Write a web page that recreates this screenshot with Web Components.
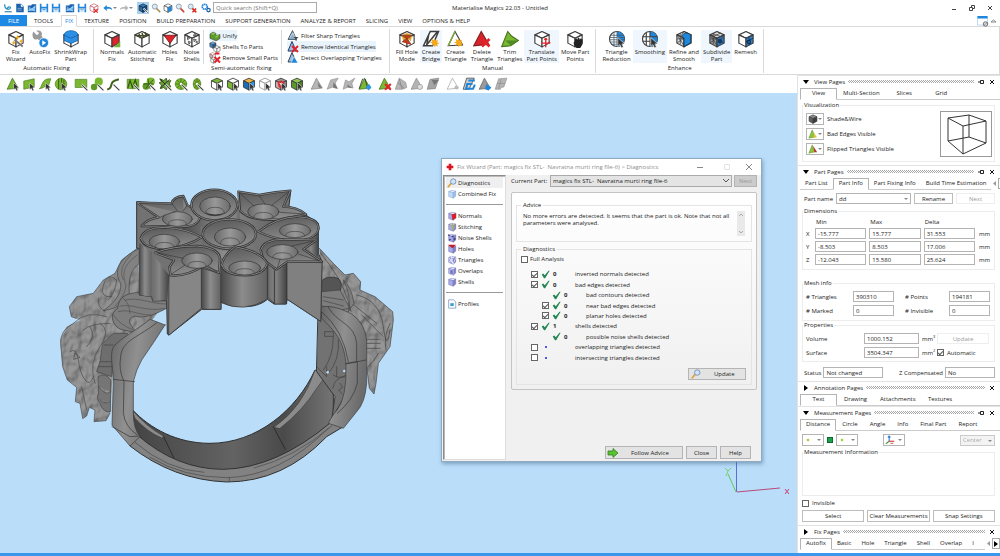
<!DOCTYPE html>
<html lang="en">
<head>
<meta charset="utf-8">
<title>Materialise Magics 22.03 - Untitled</title>
<style>
html,body{margin:0;padding:0}
body{font:6px/8px "Open Sans","Noto Sans",sans-serif;color:#1c1c1c;background:#fff}
</style>
</head>
<body>
<mg-app></mg-app>
<script>
const BASE=`*{box-sizing:border-box}
:host{display:block}
button,input,select,textarea{font:inherit;color:inherit;margin:0;padding:0;border:0;background:none;border-radius:0;outline:0;min-width:0}
button{cursor:pointer;white-space:nowrap}
a{color:inherit;text-decoration:none}
label{white-space:nowrap}
input[type=checkbox]{appearance:none;width:7px;height:7px;border:1px solid #666;background:#fff;display:inline-grid;place-items:center;flex:none}
input[type=checkbox]:checked::before{content:"";width:4px;height:2px;border:solid #555;border-width:0 0 1px 1px;transform:rotate(-45deg)}
fieldset{margin:0;padding:0;border:1px solid #e4e4e4;min-width:0}
legend{padding:0 2px;line-height:8px}
.box{height:11px;border:1px solid #b4b4b4;background:#fff;padding:0 2px;width:100%}
.btn{height:12px;border:1px solid #bdbdbd;background:#fff;text-align:center}`;
function define(name,css,render){
  customElements.define(name,class extends HTMLElement{
    connectedCallback(){
      if(this.shadowRoot)return;
      const t=document.createElement('template');
      t.innerHTML='<style>'+BASE+css+'</style>'+render(this);
      this.attachShadow({mode:'open'}).append(t.content.cloneNode(true));
    }
  });
}

/* ---------- icons (24 unit grid) ---------- */
const K='#3c3c3c',B='#1f86dc',R='#e0242c',G='#7ab82f';
const cube=(top='#fff',l='#fff',r='#fff',s=K)=>`<g stroke="${s}" stroke-width="1.5" stroke-linejoin="round"><path fill="${top}" d="M12 2 21.500 6.500 12 11 2.500 6.500z"/><path fill="${l}" d="M2.500 6.500 12 11V22.500L2.500 17.500z"/><path fill="${r}" d="M21.500 6.500 12 11V22.500L21.500 17.500z"/></g>`;
const cursor='<path fill="#333" stroke="#fff" stroke-width=".8" d="M13 10v12l3-2.500 2 4.500 2.500-1.200-2-4.300h4z"/>';
const wand='<path stroke="#fff" stroke-width="4" d="m13 13 10 10"/><path stroke="#444" stroke-width="2" d="m13 13 10 10"/>';
const star='<path fill="#f5a81c" d="m17 11 1.200 3.200 3.200-1.200-1.200 3.200 3.200 1.300-3.200 1.300 1.200 3.200-3.200-1.200L17 23l-1.200-3.200-3.200 1.200 1.200-3.200-3.200-1.300 3.200-1.300-1.200-3.200 3.200 1.200z"/>';
const cross='<path stroke="#e0242c" stroke-width="3.500" d="m12 12 10 10M22 12 12 22"/>';
const tri=(f,s)=>`<path fill="${f}" stroke="${s}" stroke-width="1.300" stroke-linejoin="round" d="M11 2 21 19 2 21z"/>`;
const GS='#44731b',gtri=tri(G,GS),grey=tri('#b5b5b5','#8b8b8b');
const mag=(c='#c98a30')=>`<path stroke="${c}" stroke-width="4" stroke-linecap="round" d="m13 13 8 8"/><circle cx="9" cy="8.500" r="6" fill="#dceaf6" stroke="#8798a8" stroke-width="2"/>`;
const mag2=`<path stroke="#d9a23a" stroke-width="4" stroke-linecap="round" d="m9 14-6 7"/><circle cx="15" cy="8.500" r="6.500" fill="#cfe6fa" stroke="#6b86b0" stroke-width="2"/>`;
const disk=`<path fill="${B}" d="M2 2h20v20H2zM6 2v7h12V2zM6 13v9h12v-9z" fill-rule="evenodd"/><path fill="${B}" d="M8 15h8v2H8zM8 18.500h8v1.500H8z"/>`;
const pcube=(extra='')=>`<g stroke="#6264a8" stroke-width="1"><path fill="#e4e5fb" d="m4 6 6-3 11 2-6 4z"/><path fill="#a9abe6" d="m4 6 11 3v13L4 18z"/><path fill="#7d80cf" d="m15 9 6-4v12l-6 5z"/></g>`+extra;
const globe=`<circle cx="12" cy="12" r="10" fill="#fff" stroke="${K}" stroke-width="1.500"/>`;
const wheel=(rx)=>`<ellipse cx="12" cy="12" rx="${rx}" ry="9.500" fill="${G}" stroke="${GS}"/><path stroke="#31560f" d="M12 3v18M${12-rx} 12h${2*rx}M${12-rx*.7} 5l${rx*1.4} 14M${12+rx*.7} 5l${-rx*1.4} 14"/><circle cx="12" cy="12" r="2" fill="#fff"/>`+wand;
const ICONS={
 logo:`<path fill="none" stroke="#2c8fc4" stroke-width="3" d="M4 3c0 9 3 12 9 12s6-6 2-6-5 6-5 8"/><path stroke="#2c6f94" stroke-width="2.500" d="M4 21h17"/>`,
 doc:`<path fill="#1b62ad" d="M3 2h12l6 6v14H3z"/><path fill="#fff" d="M14 2v7h7z"/><path stroke="#fff" d="M6 13h10M6 17h10"/>`,
 import:`<path fill="#1b62ad" d="M2 6h8l2-3h10v19H2z"/><path fill="#69b6ef" d="m4 10 6 5 10-10v14H4z"/><path stroke="#fff" d="m3 18 18-9M4 9l15 11"/>`,
 disk,saveas:disk+`<path stroke="#fff" stroke-width="3" d="M4 14h16"/><path stroke="#29669e" stroke-width="1.500" d="M4 14h16"/>`,
 rmcube:cube('#fff','#fff','#fff','#c5525b')+`<path stroke="${R}" stroke-width="3" d="m12 14 9 9m0-9-9 9"/>`,
 undo:`<path fill="${B}" d="M9 5v4c8 0 13 2 13 8-3-3-7-4-13-3v5l-8-7z"/>`,
 redo:`<path fill="#b9b9b9" d="M15 5v4C7 9 2 11 2 17c3-3 7-4 13-3v5l8-7z"/>`,
 bcube:cube('#2e7fc4','#2e6ea6','#184d80','#123')+wand,
 zfit:mag('#a99157'),zcube:cube()+`<path fill="${B}" d="m12 11 9-4v11l-9 4z"/>`,zoom:mag('#d03d2f'),
 zrm:mag('#d98b2f')+`<path stroke="${R}" stroke-width="3.500" d="m13 13 9 9m0-9-9 9"/>`,
 gears:`<circle cx="9" cy="9" r="6" fill="none" stroke="${B}" stroke-width="4" stroke-dasharray="4 1"/><circle cx="18" cy="17" r="4" fill="#fff" stroke="#1b62ad" stroke-width="3"/>`,
 fixwiz:cube()+`<path stroke="#777" stroke-width="2.500" d="m10 13 11 9"/><path fill="#f5a81c" d="m14 6 1 3 3 1-3 1-1 3-1-3-3-1 3-1zM19 12l1 2 2 1-2 1-1 2-1-2-2-1 2-1zM9 14l1 2 2 1-2 1-1 2-1-2-2-1 2-1z"/>`,
 autofix:`<path fill="#9a9a9a" d="M3 2 8 7l3-3-4-3c6-2 9 3 7 7l8 9-4 4-9-9C4 15 0 9 3 2z"/><circle cx="17" cy="17" r="6.500" fill="${B}" stroke="#fff"/><path fill="#fff" d="m15 13.500 5 3.500-5 3.500z"/>`,
 shrink:cube()+`<path fill="#2b8fe6" stroke="#155b9c" d="M12 1c6 0 9 3 9 5v8l-9 4-9-4V6c0-2 3-5 9-5z"/><path fill="none" stroke="#155b9c" d="m3 7 9 4 9-4"/>`,
 normals:cube('#fff','#fff',R)+`<path fill="#74b53c" d="m14 23 9-8v8z"/>`,
 stitch:cube()+`<path stroke="#454a25" stroke-width="2" d="m5 8 15-2M8 5l2 6M12 4l2 6M16 3l2 6"/>`,
 holes:cube()+`<path fill="${R}" stroke="#5e1114" d="m4 7 16 0-8 11z"/>`,
 noise:cube()+`<g stroke="#444" fill="#bbb"><path d="m6 9 3 2-3 2zM15 5l3 2-4 1zM14 12l4 1-3 3zM7 15l3 1-2 3zM17 16l2-1v3z"/></g>`,
 unify:`<path fill="#5c9a2b" stroke="#335" d="m2 8 6-4 6 3v4l8-2v8l-8 5-6-3-6-2z"/><path fill="#8bc84a" d="m8 5 5 2-5 3-4-2zM13 12l8-3-4 5-4 2z"/>`,
 shells:`<g transform="scale(.65)">${cube('#78aee0','#3c82c4','#205c96')}</g><g transform="translate(8 8) scale(.66)">${cube()}</g>`,
 rmsmall:`<g transform="scale(.6)">${cube('#fff','#bbb','#eee','#844')}</g><g transform="translate(2 9) scale(.6)">${cube('#fff','#fff','#eee',K)}</g><path stroke="${R}" stroke-width="4" d="m11 10 11 11m0-11L11 21M12 3h9"/>`,
 sharp:`<path fill="#8dabc2" stroke="#345" stroke-width="1.500" d="m11 1 8 18H2z"/><path stroke="#fff" d="m6 15 6-9 4 11"/><path fill="#445" d="M13 14h10l-4 4v5l-2-2v-3z"/>`,
 ident:`<path fill="#9cc3e6" stroke="#223a66" stroke-width="2" d="m10 1 8 19H2z"/><path stroke="${R}" stroke-width="4" d="m10 10 12 12m0-12L10 22"/>`,
 overlap:`<path fill="#9cc3e6" stroke="#345" stroke-width="2" d="m10 1 8 19H2z"/><path fill="${B}" stroke="#fff" d="m14 9 8 13H8z"/>`,
 fillhole:cube()+`<path fill="#e7a12b" d="m5 7 7-3 7 3-2 8-5-4-5 4z"/><path fill="#c23a1e" stroke="#742" d="m5 7 14 0-7 5zM5 16l7-5 6 9"/>`,
 bridge:`<path fill="#fff" stroke="${K}" stroke-width="2" d="M2 21 11 2h11l-8 19zM9 6l-3 15M20 3 6 20"/>`+star,
 createtri:`<path fill="#fff" stroke="${K}" stroke-width="1.500" d="M12 2 22 20 3 21z"/><path stroke="#86a93c" stroke-width="2" d="M12 2 3 21"/>`+star,
 deltri:`<path fill="#d8232b" stroke="#7c2222" stroke-width="1.500" d="M11 2 21 19 1 21z"/>`+cross,
 trim:`<path fill="#7ab82f" stroke="#4a741f" stroke-width="1.500" d="M9 2 14 8l9 6-10 7L1 22z"/><path fill="#508a22" d="m6 14 17 0-10 7z"/>`,
 translate:cube()+`<path stroke="${R}" stroke-width="1.800" d="M17 12v11M11 17.500h12M17 11l-2 2M17 11l2 2M23 17.500l-2-2"/>`,
 move:cube()+`<path fill="#222" d="M12 15v-3l2-1 1 2 1-3 2 1v2l2-2 2 2v6l-3 5h-5l-3-4-1-3z"/>`,
 reduction:globe+`<path fill="${B}" d="M12 2a10 10 0 0 1 0 20z"/><path stroke="#456" d="M3 7h18M2 10h20M2 13h20M3 16h18M5 19h14M8 3v18M12 2v20"/>`+cursor,
 smoothing:globe+`<path fill="${B}" d="M12 2a10 10 0 0 1 0 20z"/><path stroke="${K}" stroke-width="1.500" fill="none" d="M2 9h20M2 15h11M7 4v16M12 2v20"/>`+cursor,
 refine:cube('#fff','#ddd',B)+`<path stroke="${K}" d="m3 7 9 14M3 12l9-1M3 17l9-6M7 5v14M7 9l5-7 5 2"/>`+`<path fill="${B}" stroke="#134" d="M9 8c2-4 6-5 10-3l2 2v10l-9 5V11z"/>`,
 subdivide:cube('#ddd','#999','#2e78be')+`<path stroke="${K}" d="m3 7 9 14M3 12l9-1M3 17l9-6M7 5v14M6 5l12 4M17 4 6 9M12 16l9-7M12 11l9 7"/><circle cx="16" cy="15" r="3" fill="#123c66"/>`,
 remesh:cube('#fff','#fff','#2e7fcc')+`<path stroke="#123" fill="none" d="m12 16 9-5M16 10v10M14 14h4v4h-4z"/>`,
 t1:gtri+cursor,t2:`<path fill="${G}" stroke="${GS}" d="M3 7 21 3v14L3 21z"/>`+cursor,
 t3:`<path fill="${G}" stroke="${GS}" d="M2 20c4-2 3-6 7-12 4-5 8-5 13-5l-4 12c-6-1-8 5-16 5z"/>`+cursor,
 t4:`<circle cx="12" cy="12" r="10" fill="${G}" stroke="${GS}"/><path stroke="#31560f" stroke-width="1.500" d="M8 3v18M13 2v20M17 4v15"/>`+cursor,
 t5:`<path fill="${G}" stroke="${GS}" d="M2 4h20v14H2z"/>`+wand,
 t6:`<circle cx="15" cy="8" r="7" fill="${G}"/><circle cx="7" cy="17" r="5.500" fill="#5d9a26"/>`+wand,
 t7:`<path fill="none" stroke="#3f631c" stroke-width="3.500" d="M2 21c9 0 5-9 10-13 3-3 6-3 10-4"/>`+wand,
 t8:`<path fill="${G}" stroke="${GS}" d="M2 4h20v16H2z"/><path fill="none" stroke="#31560f" stroke-width="2" d="M3 19 7 6l4 12 5-13 4 14"/>`+wand,
 t9:`<circle cx="15" cy="8" r="7" fill="${G}"/><circle cx="7" cy="16" r="6" fill="#5d9a26"/><path stroke="#31560f" stroke-width="1.500" d="m2 12 18 0M10 3l4 18M6 20 20 4"/>`+wand,
 t10:`<path fill="#6a9f35" stroke="#31560f" stroke-width="1.500" d="m3 3 7 3 4-4 2 6 6-2-3 6 3 5-6 1-2 4-4-4-6 2 2-6-4-4 4-2z"/><path stroke="#222" stroke-width="1.500" d="m4 4 15 15M20 4 4 19"/>`+wand,
 t11:wheel(10),t12:wheel(6.5),
 c1:cube(G)+cursor,c2:cube('#fff',G)+cursor,c3:cube('#f2b23a','#1a6dbb','#2c9af0')+cursor,c4:cube('#fff','#fff','#fff','#999')+cursor,
 c5:cube('#999','#caa','#888')+`<path fill="#c33" d="m6 8 6-2 6 2-2 9-4 3-4-3z"/><path fill="#eee" d="m9 10 6 1-3 4z"/>`+cursor,
 c6:cube('#8fca50','#5c9a2b','#4c8523')+cursor,
 g1:grey+`<path fill="#777" d="m13 9 8 10-6-1z"/>`,g2:`<path fill="#b5b5b5" stroke="#8b8b8b" d="m8 5 13-3-5 8 2 10-6-3-10 4z"/><path fill="#777" d="m13 9 8 11-9-2z"/>`,
 g3:`<path fill="#b5b5b5" stroke="#8b8b8b" d="m6 5 6 3 10-6-5 9 2 8-8-2-9 4z"/><path fill="#777" d="m9 13 9 6-8-1z"/>`,
 g4:gtri+`<path stroke="#333" stroke-width="1.500" d="M8 3 2 20M12 3l4 14"/><path fill="#2f93e8" d="m13 18 6-6 4 6-5 5z"/>`,
 g5:gtri+`<path stroke="${R}" stroke-width="3.500" d="m12 12 10 10m0-10L12 22"/>`,
 g6:`<path fill="#b5b5b5" stroke="#8b8b8b" d="M9 2 20 9l2 9-8 3H2z"/><path stroke="#888" stroke-width="1.500" d="m9 3 5 18M6 9l12 11"/>`,
 g7:grey+`<circle cx="17" cy="17" r="4.500" fill="#ddd" stroke="#888"/>`,g8:`<path fill="#a5a5a5" stroke="#777" d="M7 4 22 2 16 20 2 21z"/><path fill="#777" d="M10 5h12l-8 9z"/>`,
 g9:tri('#fff','#aaa')+`<circle cx="18" cy="18" r="3.500" fill="#bbb"/>`,
 g10:`<path fill="#ccc" stroke="#555" stroke-width="1.500" d="M8 2 2 21h10l9-19z"/><path fill="none" stroke="${B}" stroke-width="3.500" d="M11 6h11M18 12H9l-2 8h12l3-7"/>`,
 g11:tri('#9a9a9a','#666')+`<path fill="${B}" d="m14 12 9 6-5 5-6-2z"/>`,
 g12:`<path fill="#b5b5b5" stroke="#8b8b8b" d="M8 3 22 2 17 17l-5 1-1 3H2z"/><path stroke="#888" d="M5 11h14M12 4 8 20"/>`,
 shade:cube('#8c8c8c','#5f5f5f','#3d3d3d','#444'),
 badedge:`<path fill="#8bc43c" stroke="#5c8424" d="M10 2 18 19 2 22z"/><path fill="#e8c43b" d="m14 10 8 10-8 1z"/>`,
 flipped:`<path fill="#8bc43c" stroke="#5c8424" d="M10 2 17 19 2 22z"/><path fill="#c0272d" d="m12 4 10 16-6 0z"/>`,
 axes:`<path stroke="#2277cc" stroke-width="2.500" d="M10 15V2M10 2 7 6M10 2l3 4"/><path stroke="#3a9a3a" stroke-width="2.500" d="m10 15-8 6"/><path stroke="#d22" stroke-width="2.500" d="M10 15h12"/><path stroke="#c44" stroke-width="2" d="M13 20h7"/>`,
 dot:`<circle cx="12" cy="12" r="4" fill="#a6ce39"/>`,
 mag2,profile:`<path fill="#fff" stroke="#5580ad" stroke-width="1.500" d="M4 2h12l5 5v15H4z"/><path fill="#3a9bd8" d="M8 10h8v7H8z"/>`,
 combined:pcube().replaceAll('#6264a8','#6f9bd0').replaceAll('#7d80cf','#9dbfe8').replaceAll('#a9abe6','#c5daf5'),
 p1:pcube(`<path fill="#d6202b" d="m11 8 11-2v11l-9 5z"/>`),p2:pcube(`<path stroke="#a8b36a" stroke-width="3" d="m12 3 4 18M9 9l9-2M10 14l9-2"/>`),
 p3:pcube(`<g fill="#353770"><path d="m2 3 6 2-4 3zM10 8l6-3-1 6zM5 14l5 1-4 4zM15 14l6-2-2 6z"/></g>`),p4:pcube(`<path fill="#c3202d" d="M1 2h20l-7 8z"/>`),
 p5:pcube(`<path stroke="#fff" stroke-width="1.500" d="m4 6 11 15M15 9 4 18M10 3l4 18M21 6l-6 15"/>`),p6:pcube(`<path fill="#6f72c0" stroke="#fff" d="M7 9h8v11H7z"/>`),p7:pcube(),
 follow:`<path fill="#59c332" stroke="#2c7a17" stroke-width="1.500" d="M2 8h10V3l10 9-10 9v-5H2z"/>`,
 plus:`<path fill="#d9161f" d="M8 2h8v6h6v8h-6v6H8v-6H2V8h6z"/>`,
 help:`<path fill="#fff" stroke="#7fb7e0" d="M1 3h20v17H1z"/><path fill="#1f86dc" d="M1 2h20v5H1z"/><circle cx="17" cy="18" r="4.500" fill="#ddd" stroke="#555" stroke-width="1.500"/><path stroke="#444" d="m14 21 6-6"/>`,
 tick:`<path fill="#218551" d="m2 12 4-3 4 5L20 2h3L11 22H8z"/>`
};
define('mg-icon',`:host{width:var(--s,12px);height:var(--s,12px);flex:none}svg{display:block;width:100%;height:100%}`,
 e=>`<svg viewBox="0 0 24 24" fill="none" aria-hidden="true">${ICONS[e.getAttribute('name')]}</svg>`);
const ic=(n,s=12)=>`<mg-icon name="${n}" style="--s:${s}px"></mg-icon>`;
define('mg-caret',`:host{width:0;height:0;border:2px solid transparent;border-top-color:#888;border-bottom:0;flex:none}`,()=>'');

/* ---------- title bar ---------- */
define('mg-titlebar',`:host{display:grid;grid-template-columns:1fr auto 1fr;align-items:center;height:15px}
.q{display:flex;align-items:center;gap:2px;padding-left:3px}.q button{height:12px;width:10px;display:flex;align-items:center;justify-content:center}
.q button.w{width:14px;gap:0}.q .on{background:#a9cfee;width:12px}.q i{width:0}
input{width:104px;height:11px;border:1px solid #aaa;padding:0 2px}input::placeholder{color:#777}
h1{font:inherit;margin:0}.w3{display:flex;justify-content:flex-end;gap:6px;padding-right:4px}.w3 button{width:12px;height:12px;display:grid;place-items:center}svg{display:block}`,()=>{
 const b=(n,t,c='')=>`<button class="${c}" aria-label="${t}">${ic(n,10)}${c=='w'?'<mg-caret></mg-caret>':''}</button>`;
 return `<div class="q">${b('logo','Magics')}${b('doc','New')}${b('import','Open')}${b('disk','Save')}${b('saveas','Save as')}<i></i>${b('import','Import part')}${b('saveas','Save part')}${b('rmcube','Unload part')}<i></i>${b('undo','Undo','w')}${b('redo','Redo','w')}<i></i>${b('bcube','Pan','on')}${b('zfit','Zoom')}${b('zcube','View cube')}${b('zoom','Zoom in')}${b('zrm','Unzoom')}<i></i>${b('gears','Settings')}<input type="search" aria-label="Quick search" placeholder="Quick search (Shift+Q)"></div>
 <h1>Materialise Magics 22.03 - Untitled</h1>
 <div class="w3"><button aria-label="Minimize"><svg width="6" height="6"><path stroke="#444" d="M1 4.500h4"/></svg></button><button aria-label="Restore"><svg width="6" height="6" fill="none" stroke="#444"><path d="M.5 2.500h3v3h-3zM2.500 2V.5h3v3H4"/></svg></button><button aria-label="Close"><svg width="6" height="6"><path stroke="#444" d="m1 1 4 4m0-4L1 5"/></svg></button></div>`});

/* ---------- ribbon tabs ---------- */
define('mg-menu',`:host{display:flex;height:12px;border-bottom:1px solid #d9d9d9}
nav{display:flex;flex:1}a{padding:0 5px;line-height:12px;white-space:nowrap}
.file{background:#1e88e5;color:#fff;width:27px;text-align:center;margin-right:2px}
.on{color:#1e88e5;border:1px solid #d9d9d9;border-bottom-color:#fff;padding:0 3px;margin:0 2px 0 3px;line-height:11px;height:12px;background:#fff}
div{display:flex;align-items:center;gap:2px;padding-right:4px}`,()=>`<nav><a class="file" href="#">FILE</a>${['TOOLS','FIX','TEXTURE','POSITION','BUILD PREPARATION','SUPPORT GENERATION','ANALYZE &amp; REPORT','SLICING','VIEW','OPTIONS &amp; HELP'].map(t=>`<a href="#"${t=='FIX'?' class="on"':''}>${t}</a>`).join('')}</nav><div>${ic('help',12)}<svg width="5" height="4"><path fill="none" stroke="#888" d="m0 3 2.500-2L5 3z"/></svg></div>`);

/* ---------- ribbon ---------- */
define('mg-tool',`button{display:flex;flex-direction:column;align-items:center;gap:1px;padding:0 2px;line-height:7px;min-height:33px}
:host([on]) button{background:#eff6fd}`,e=>`<button>${ic(e.getAttribute('icon'),18)}<span>${e.getAttribute('label').replace('|','<br>')}</span></button>`);
define('mg-row-tool',`button{display:flex;align-items:center;gap:2px;height:11px}:host([on]) button{background:#e9f3fc}`,e=>`<button>${ic(e.getAttribute('icon'),12)}<span>${e.getAttribute('label')}</span></button>`);
define('mg-ribbon-group',`:host{border-right:1px solid #d9d9d9;padding:0 4px;margin:2px 0 1px}
section{display:flex;flex-direction:column;height:100%}.r{display:flex;flex:1;padding-top:1px}h2{margin:0;font:inherit;text-align:center;line-height:9px}`,
 e=>`<section><div class="r"><slot></slot></div><h2>${e.getAttribute('label')}</h2></section>`);
define('mg-ribbon',`:host{display:flex;height:48px;border-bottom:1px solid #d9d9d9;border-right:1px solid #d9d9d9}
.c{display:flex;flex-direction:column;padding-left:5px;padding-right:3px}.s{border-left:1px solid #d9d9d9}`,()=>{
 const t=(i,l,on='')=>`<mg-tool icon="${i}" label="${l}" ${on}></mg-tool>`,r=(i,l,on='')=>`<mg-row-tool icon="${i}" label="${l}" ${on}></mg-row-tool>`;
 return `<mg-ribbon-group label="Automatic Fixing">${t('fixwiz','Fix|Wizard')}${t('autofix','AutoFix')}${t('shrink','ShrinkWrap|Part')}</mg-ribbon-group>
 <mg-ribbon-group label="Semi-automatic fixing">${t('normals','Normals|Fix')}${t('stitch','Automatic|Stitching')}${t('holes','Holes|Fix')}${t('noise','Noise|Shells')}
 <div class="c s">${r('unify','Unify','on')}${r('shells','Shells To Parts')}${r('rmsmall','Remove Small Parts')}</div><div class="c s">${r('sharp','Filter Sharp Triangles')}${r('ident','Remove Identical Triangles','on')}${r('overlap','Detect Overlapping Triangles')}</div></mg-ribbon-group>
 <mg-ribbon-group label="Manual">${t('fillhole','Fill Hole|Mode')}${t('bridge','Create|Bridge','on')}${t('createtri','Create|Triangle')}${t('deltri','Delete|Triangle')}${t('trim','Trim|Triangles')}${t('translate','Translate|Part Points','on')}${t('move','Move Part|Points')}</mg-ribbon-group>
 <mg-ribbon-group label="Enhance">${t('reduction','Triangle|Reduction')}${t('smoothing','Smoothing','on')}${t('refine','Refine and|Smooth')}${t('subdivide','Subdivide|Part','on')}${t('remesh','Remesh')}</mg-ribbon-group>`});

/* ---------- selection toolbar ---------- */
define('mg-strip',`:host{display:flex;align-items:center;height:18px;padding-left:2px}
.g{display:flex;padding-right:1px;padding-left:3px}button{width:16px;height:16px;display:grid;place-items:center}
.g:first-child{border-left:1px dotted #444}`,()=>[['t1','t2','t3','t4'],['t5','t6','t7'],['t8','t9','t10','t11','t12'],['c1','c2','c3','c4','c5','c6'],['g1','g2','g3','g4'],['g5','g6','g7','g8'],['g9','g10','g11','g12']].map(g=>`<div class="g">${g.map(i=>`<button aria-label="Marking tool ${i}">${ic(i,14)}</button>`).join('')}</div>`).join(''));

/* ---------- ring model ---------- */
const cup=(d,x,y,rx,ry)=>`<path d="${d}" fill="url(#bowl)" stroke="#353535" stroke-width="7"/><path d="${d}" fill="none" stroke="#828282" stroke-width="3"/><ellipse cx="${x}" cy="${y}" rx="${rx}" ry="${ry}" fill="url(#seat)" stroke="#333" stroke-width="2"/><path d="M${x-rx*.62} ${y+ry*.72}Q${x-rx*.6} ${y+ry*.1} ${x} ${y+ry*.1}T${x+rx*.62} ${y+ry*.72}" fill="none" stroke="#444" stroke-width="2"/>`;
define('mg-ring',`:host{width:360px}svg{display:block;width:100%;height:auto}`,()=>`<svg viewBox="0 0 1080 930" role="img" aria-label="Ring part"><defs>
<linearGradient id="cyl"><stop offset="0" stop-color="#4a4a4a"/><stop offset=".45" stop-color="#8c8c8c"/><stop offset="1" stop-color="#626262"/></linearGradient>
<linearGradient id="cyl2"><stop offset="0" stop-color="#6c6c6c"/><stop offset=".4" stop-color="#868686"/><stop offset="1" stop-color="#424242"/></linearGradient>
<linearGradient id="bowl" x2=".3" y2="1"><stop offset="0" stop-color="#565656"/><stop offset="1" stop-color="#8a8a8a"/></linearGradient>
<linearGradient id="seat"><stop offset="0" stop-color="#686868"/><stop offset=".5" stop-color="#989898"/><stop offset="1" stop-color="#6c6c6c"/></linearGradient>
<linearGradient id="in"><stop offset="0" stop-color="#444"/><stop offset=".5" stop-color="#636363"/><stop offset=".75" stop-color="#4a4a4a"/><stop offset="1" stop-color="#747474"/></linearGradient>
<linearGradient id="sh" x2="1" y2=".4"><stop offset="0" stop-color="#666"/><stop offset=".5" stop-color="#909090"/><stop offset="1" stop-color="#6c6c6c"/></linearGradient>
<filter id="rough" x="0" y="0" width="1" height="1"><feTurbulence type="fractalNoise" baseFrequency=".045 .03" numOctaves="2" seed="8"/><feDiffuseLighting surfaceScale="9" lighting-color="#989898" result="l"><feDistantLight azimuth="235" elevation="60"/></feDiffuseLighting><feComposite in="l" in2="SourceGraphic" operator="in"/></filter></defs>
<g stroke-linejoin="round" stroke-linecap="round">
<path fill="url(#in)" stroke="#2d2d2d" stroke-width="3" d="M248 690C300 745 380 790 480 790C620 790 740 690 795 570L850 610L850 740Q700 880 520 880Q340 870 250 760z"/>
<path fill="none" stroke="#2d2d2d" stroke-width="3" d="M340 768 372 835M670 740 706 808"/>
<path fill="#8b8b8b" stroke="#444" stroke-width="2" d="M248 692Q290 740 340 768L337 775Q290 755 255 715zM672 742Q760 680 795 570L830 585 800 625Q760 690 690 745z"/>
<path fill="#828282" stroke="#333" stroke-width="3" d="M262 765Q380 868 520 868Q680 865 845 725L880 740 830 770Q700 906 530 906Q370 900 240 798z"/>
<path fill="none" stroke="#484848" stroke-width="2" d="M255 787Q350 870 462 877M300 832Q400 892 530 893Q690 890 835 745M612 864Q730 835 845 738M538 893v12"/>
<!-- left figure -->
<g filter="url(#rough)"><path d="M262 205 215 240 195 280 160 300 130 340 80 350 58 380 64 410 90 420 50 440 30 480 38 560 52 600 80 622 76 665 90 670 98 716 110 708 118 682 135 690 132 725 168 722 180 700 190 560 300 430 350 360 270 340z"/></g>
<path fill="none" stroke="#484848" stroke-width="2" d="M262 205 215 240 195 280 160 300 130 340 80 350 58 380 64 410 78 415M170 410Q110 390 70 430 30 450 32 490L38 560 52 600 80 622 76 665 90 670 98 716 110 708 118 682 135 690 132 725 168 722 180 700M185 350Q148 355 160 315T200 300Q195 340 175 360M150 430Q185 450 150 500T135 610M60 515Q80 500 85 540T105 600 130 590M95 620 110 690M180 430Q120 430 100 450M120 440Q140 470 110 500M75 520l15 12-18 6zM145 355Q140 380 165 395"/>
<path fill="#828282" stroke="#444" stroke-width="2" d="M265 207C205 235 190 275 212 310C215 345 190 370 160 392C210 385 235 360 238 340C235 300 240 270 268 250z"/>
<path fill="none" stroke="#555" stroke-width="2" d="M262 225C220 255 215 280 228 315Q225 350 195 378M245 222Q200 265 220 300"/>
<path fill="#7e7e7e" stroke="#3c3c3c" stroke-width="2" d="M350 362C310 355 290 338 260 338C225 340 205 355 203 385C180 400 185 425 200 440C215 455 240 450 262 460C235 430 230 415 255 408C285 420 330 395 350 385z"/>
<path fill="none" stroke="#505050" stroke-width="2" d="M348 372C300 372 270 350 225 360M345 385C290 398 250 370 210 378M300 405C260 405 240 385 205 395M190 405Q210 435 250 450M215 350Q240 370 240 400"/>
<path fill="#6e6e6e" stroke="#444" stroke-width="2" d="M158 490 190 460 250 460 220 490 188 520 185 590 140 575 150 545zM162 495h28M150 545h35M145 560h40"/><circle cx="238" cy="464" r="4" fill="#badefa"/>
<path fill="url(#sh)" stroke="#383838" stroke-width="2" d="M345 435Q320 425 300 418C260 450 220 470 195 495C175 515 190 560 190 600L186 735 240 798 270 770Q250 745 250 700V605Q258 570 275 540Q310 490 345 435z"/>
<path fill="none" stroke="#333" stroke-width="2" d="M320 428C270 470 215 480 212 530Q205 570 222 604L220 700Q225 740 262 765M190 598 254 605M186 740 240 770 270 768"/>
<path fill="#757575" stroke="#444" stroke-width="2" d="M145 590Q165 575 182 600V695Q160 700 150 670 138 660 145 640zM147 620Q165 650 182 635M150 660Q165 675 180 665"/>
<!-- right figure -->
<path fill="#727272" stroke="#383838" stroke-width="3" d="M805 400 850 390 900 480 890 640 860 690 845 720 855 650 800 575z"/>
<path fill="none" stroke="#404040" stroke-width="2" d="M825 455h25v14h-25zM820 570Q850 530 850 470M835 580Q870 540 865 480M800 560 830 590 830 560M850 585Q870 600 888 585M848 625Q855 590 885 590M860 560v30M870 610l8 12-12 8 10 12"/><circle cx="833" cy="577" r="4" fill="#badefa"/><circle cx="883" cy="573" r="4" fill="#badefa"/>
<g filter="url(#rough)"><path d="M808 205 850 250 885 285 910 280 932 305 930 330 975 350 1028 395 1030 420 1020 500 985 550 978 610 972 642 958 625 950 560 948 470 900 400 815 375z"/></g>
<path fill="none" stroke="#404040" stroke-width="2" d="M808 205 850 250 885 285 910 280 932 305 930 330 975 350 1028 395 1030 420 1020 500 985 550 978 610 972 642 958 625 950 560M920 345Q990 360 1000 440T1020 450M905 370 980 430M950 505H990M950 490H990M950 478h40M935 405 1000 470M1020 430Q1000 470 1008 510M955 560Q975 540 985 520"/>
<path fill="#555" stroke="#2c2c2c" stroke-width="2" d="M818 300Q835 285 865 295 880 310 870 335H818z"/>
<path fill="#7d7d7d" stroke="#444" stroke-width="2" d="M815 335 870 330 900 385 870 390 815 378zM880 300Q905 320 912 370L895 395Q905 345 880 300z"/>
<path fill="none" stroke="#444" stroke-width="2" d="M812 220Q870 290 890 350T900 390M820 350 880 360M820 362 880 378"/>
<path fill="url(#sh)" stroke="#383838" stroke-width="2" d="M815 380C850 375 880 390 905 402Q945 430 950 480V610Q945 670 920 695L880 745 835 730Q850 700 862 690Q890 650 888 560C885 480 850 450 815 415z"/>
<path fill="none" stroke="#333" stroke-width="2" d="M835 382C860 430 915 430 920 490V545L888 550M948 540 888 552M922 545V610Q910 660 862 700M815 395Q880 450 895 545"/>
<!-- crown walls -->
<path fill="#727272" stroke="#333" stroke-width="3" d="M260 66V205H268V345L305 350 308 363 350 362 352 462 357 465 455 388 513 388V365Q560 380 590 380 630 378 652 358L672 372H708L712 358 812 424 816 245 805 220V130L766 104 715 95 722 34 640 90 570 90 560 70 440 80 400 90 360 72z"/>
<path fill="url(#cyl)" d="M268 190V345L305 350V215z"/><path fill="url(#cyl2)" d="M308 222V363L352 360 357 285z"/>
<path fill="#868686" stroke="#333" stroke-width="2" d="M358 287 455 262V384L357 465z"/><path fill="url(#cyl)" stroke="#333" stroke-width="2" d="M455 264 513 282V388H462L455 384z"/>
<path fill="url(#cyl)" stroke="#333" stroke-width="2" d="M514 262Q580 310 652 262V358Q580 400 514 368z"/>
<path fill="url(#cyl2)" stroke="#333" stroke-width="2" d="M654 245 674 272V372L654 352zM674 272 710 245V372H674z"/>
<path fill="#808080" stroke="#333" stroke-width="2" d="M712 245 816 248 812 424 712 358z"/><path fill="url(#cyl2)" d="M768 170 805 140V232L770 205z"/>
<path fill="url(#cyl)" d="M458 165Q480 215 538 212 600 212 620 165V235H458zM395 145 452 120V165H395zM425 80Q490 145 560 80V140H425zM570 100 680 120 625 150 570 130z"/>
${cup('M262 68 365 70Q370 50 400 48L412 75Q445 90 450 112 445 140 395 140L275 138Q290 118 325 112z',382,117,45,22)}
<path fill="#858585" stroke="#3a3a3a" stroke-width="2" d="M270 72 330 112 345 105 375 95M365 70 382 92M400 52 410 78 400 92"/>
${cup('M424 75a69 46 0 0 1 138 0a69 46 0 0 1-138 0z',495,79,46,28)}<path fill="#333" d="M465 97Q495 110 527 97L510 105Q490 110 475 104z"/>
${cup('M565 35 628 45Q680 35 721 32L700 80Q740 80 768 103L690 118Q600 125 570 92z',640,95,47,23)}
<path fill="none" stroke="#3a3a3a" stroke-width="2" d="M568 38 612 78M628 48 645 72M718 34 665 76M764 102 690 97"/>
${cup('M272 175Q280 142 345 142 410 146 456 172 410 200 345 207 280 205 272 175z',343,185,46,22)}
${cup('M458 162a80 44 0 0 1 160 0a80 44 0 0 1-160 0z',540,171,47,27)}
${cup('M625 155Q680 112 740 110 806 112 806 145 800 180 735 183 670 178 625 155z',735,152,47,21)}
${cup('M315 218Q370 198 440 198 505 202 510 235L507 278 460 258Q410 290 362 286L358 262 372 240z',441,242,46,23)}
<path fill="none" stroke="#3a3a3a" stroke-width="2" d="M320 218 400 235M365 282 405 255M500 275 475 258"/>
${cup('M632 210Q640 178 700 178L800 180 760 208 816 245 712 245 680 268 640 240z',697,216,47,22)}
<path fill="none" stroke="#3a3a3a" stroke-width="2" d="M796 182 725 198M812 244 745 222M682 264 690 238"/>
${cup('M515 255Q520 225 555 200 635 215 652 250 645 285 585 286 522 285 515 255z',584,264,48,21)}
</g></svg>`);

/* ---------- fix wizard dialog ---------- */
define('mg-wizard',`:host{width:321px;background:#f0f0f0;border:1px solid #8eaac2;box-shadow:1px 2px 4px #4a6a8a88}
header{display:flex;align-items:center;background:#fff;height:16px;padding:0 5px 0 4px;gap:3px;color:#8d8d8d}header h2{font:inherit;margin:0;flex:1}
header button{width:24px;height:14px;display:grid;place-items:center}header button:last-child{width:14px}
.main{display:grid;grid-template-columns:63px 1fr;gap:5px;padding:0 4px 1px 1px}
nav{background:#fff;border:1px solid #8c8c8c;border-right-color:#ddd;border-bottom-color:#ddd;padding:1px 2px;box-shadow:inset 1px 1px #bbb}
nav a{display:flex;align-items:center;gap:1px;height:11px;padding-left:1px;white-space:nowrap}nav a.on{background:#efefef}nav hr{border:0;border-top:1px solid #999;margin:5px 0}
.body{display:flex;flex-direction:column}
.cur{display:grid;grid-template-columns:37px 1fr 23px;gap:2px;align-items:center;padding-bottom:5px}
.sel{position:relative;height:12px}.sel select{appearance:none;width:100%;height:12px;border:1px solid #aaa;background:#e4e4e4;padding:0 2px}
.sel svg{position:absolute;right:3px;top:4px;pointer-events:none}
.btn{background:#e3e3e3;border-color:#b4b4b4}.cur .btn{background:#ccc;color:#999}
.card{border:1px solid #c4c4c4;border-radius:2px;background:linear-gradient(#fff,#f0f0f0);padding:8px 4px 4px}
fieldset{padding:0 4px}.adv{display:flex;justify-content:space-between;height:32px;padding:2px 2px 0;line-height:7px}
.adv p{margin:2px 0 0;width:212px}.sb{width:8px;height:25px;background:#e9e9e9;display:flex;flex-direction:column;justify-content:space-between;align-items:center;padding:2px 0}
.d{margin-top:3px}.full{display:flex;align-items:center;gap:2px;height:12px}
.rows{display:grid;height:94px;grid-auto-rows:1fr;padding-left:10px;margin-top:4px}
.row{display:grid;grid-template-columns:7px 9px 19px 1fr;gap:3px;align-items:center}.row.i{padding-left:11px}.row b{font-weight:700}.row u{width:2px;height:2px;background:#55e;justify-self:center}
.row .t{white-space:nowrap}.up{display:flex;justify-content:flex-end;padding:5px 1px 4px 0}.up .btn{width:58px;display:flex;align-items:center;padding:0 2px;gap:13px}
footer{display:flex;justify-content:flex-end;gap:3px;margin-top:auto;padding:0 6px 1px 0}footer .btn{width:31px;height:13px}footer .f{width:78px;display:flex;align-items:center;padding:0 1px;gap:12px}
.body .space{height:56px}`,()=>{
 const rows=[[1,1,0,'inverted normals detected'],[1,1,0,'bad edges detected'],[0,1,0,'bad contours detected',1],[1,1,0,'near bad edges detected',1],[1,1,0,'planar holes detected',1],[1,1,1,'shells detected'],[0,1,0,'possible noise shells detected',1],[2,0,'','overlapping triangles detected'],[2,0,'','intersecting triangles detected']];
 const a=(i,t,c='')=>`<a href="#" class="${c}">${ic(i,10)}<span>${t}</span></a>`;
 return `<header>${ic('plus',8)}<h2>Fix Wizard (Part: magics fix STL-&nbsp; Navratna murti ring file-6) &gt; Diagnostics</h2><button aria-label="Minimize"><svg width="6" height="6"><path stroke="#888" d="M0 3.500h6"/></svg></button><button aria-label="Maximize"><svg width="6" height="6"><path fill="none" stroke="#e2e2e2" d="M.5.5h5v5h-5z"/></svg></button><button aria-label="Close"><svg width="6" height="6"><path stroke="#888" d="m0 0 6 6m0-6L0 6"/></svg></button></header>
 <div class="main"><nav>${a('mag2','Diagnostics','on')}${a('combined','Combined Fix')}<hr>${a('p1','Normals')}${a('p2','Stitching')}${a('p3','Noise Shells')}${a('p4','Holes')}${a('p5','Triangles')}${a('p6','Overlaps')}${a('p7','Shells')}<hr>${a('profile','Profiles')}</nav>
 <div class="body"><div class="cur"><label for="part">Current Part:</label><div class="sel"><select id="part"><option>magics fix STL-&nbsp; Navratna murti ring file-6</option></select><svg width="6" height="4"><path fill="none" stroke="#555" d="m0 0 3 3 3-3"/></svg></div><button class="btn" disabled>Next</button></div>
 <div class="card"><fieldset><legend>Advice</legend><div class="adv"><p>No more errors are detected. It seems that the part is ok. Note that not all parameters were analysed.</p><div class="sb"><svg width="4" height="3"><path fill="none" stroke="#aaa" d="m0 3 2-2 2 2"/></svg><svg width="4" height="3"><path fill="none" stroke="#aaa" d="m0 0 2 2 2-2"/></svg></div></div></fieldset>
 <fieldset class="d"><legend>Diagnostics</legend><label class="full"><input type="checkbox">Full Analysis</label>
 <div class="rows">${rows.map((r,i)=>`<div class="row${r[4]?' i':''}">${r[0]?`<input type="checkbox" id="r${i}"${r[0]==1?' checked':''}>`:'<span></span>'}${r[1]?ic('tick',9):'<u></u>'}<b>${r[2]}</b>${r[0]?`<label class="t" for="r${i}">${r[3]}</label>`:`<span class="t">${r[3]}</span>`}</div>`).join('')}</div>
 <div class="up"><button class="btn">${ic('mag2',10)}<span>Update</span></button></div></fieldset></div><div class="space"></div>
 <footer><button class="btn f">${ic('follow',12)}<span>Follow Advice</span></button><button class="btn">Close</button><button class="btn">Help</button></footer></div></div>`});

/* ---------- 3D viewport ---------- */
define('mg-viewport',`:host{position:relative;background:#badefa;overflow:hidden}
mg-ring{position:absolute;left:50px;top:87px}mg-wizard{position:absolute;left:441px;top:65px}.ax{position:absolute;left:715px;top:357px}`,
 ()=>`<mg-ring></mg-ring><svg class="ax" width="80" height="50" fill="none"><path stroke="#5672d8" d="M21.500 0v42"/><path stroke="#5ccc5c" d="M21 42 13 24"/><path stroke="#b94a78" d="m22 42 43-4"/><path stroke="#6fd66f" d="m10 18 3 3 3-3m-3 3-2 5"/><path stroke="#cc3c72" d="m70 39 4 5m0-5-4 5"/></svg><mg-wizard></mg-wizard>`);

/* ---------- right-hand pages ---------- */
define('mg-page',`:host{border-top:1px solid #e2e2e2}header{display:flex;align-items:center;height:11px;padding:0 4px 0 5px;gap:3px}
h2{font:inherit;margin:0 0 0 2px;white-space:nowrap}i{flex:1;height:3px;background:repeating-conic-gradient(#aaa 0 25%,#fff 0 50%) 0 0/2px 2px}
header button{height:8px;width:8px;display:grid;place-items:center}header .tw{width:6px}`,
 e=>`<header><button class="tw" aria-label="Toggle"><svg width="6" height="6"><path d="${e.hasAttribute('closed')?'M1 0v6l4-3z':'M0 1h6L3 5z'}"/></svg></button><h2>${e.getAttribute('heading')}</h2><i></i>${e.hasAttribute('nopin')?'':'<button aria-label="Pin"><svg width="6" height="4"><path stroke="#222" fill="none" d="M0 2h2M2.500.5h3v3h-3z"/></svg></button>'}<button aria-label="Close"><svg width="4" height="4"><path stroke="#111" d="m0 0 4 4m0-4L0 4"/></svg></button></header><slot></slot>`);
define('mg-tabs',`:host{display:flex;height:13px;padding-left:2px;padding-top:1px}
nav{display:flex;flex:1;border-bottom:1px solid #ccc}
a{padding:0 6px;text-align:center;white-space:nowrap;line-height:11px;height:12px}:host([wide]) a{min-width:37px}:host([more]) a{padding:0 5px}
a.on,:host([more]) a.on{border:1px solid #b4b4b4;border-bottom-color:#fff;background:#fff;line-height:9px;padding:0 5px}
div{display:flex}div button{width:7px;height:11px;display:grid;place-items:center}div button+button{border:1px solid #aaa;width:8px}`,
 e=>`<nav>${e.getAttribute('items').split('|').map((t,i)=>`<a href="#"${i==(e.getAttribute('on')||0)?' class="on"':''}>${t}</a>`).join('')}</nav>${e.hasAttribute('more')?'<div><button aria-label="Previous"><svg width="3" height="5"><path fill="#999" d="M3 0v5L0 2.500z"/></svg></button><button aria-label="Next"><svg width="4" height="6"><path d="M0 0v6l4-3z"/></svg></button></div>':''}`);
define('mg-side',`:host{display:flex;flex-direction:column;border-left:1px solid #e2e2e2}
.p{padding:1px 5px 3px 4px}fieldset{border-color:#ececec}legend{padding:0 1px}
.vis{display:flex;justify-content:space-between;padding:2px 2px 4px 3px}.vis .l{display:grid;gap:3px;align-content:center}.vis .l div{display:flex;align-items:center;gap:3px}
.dd{display:flex;align-items:center;justify-content:space-between;width:18px;height:12px;border:1px solid #b4b4b4;padding:0 2px 0 1px}
.cube{width:52px;height:46px;border:1px solid #999;display:flex;align-items:center;justify-content:center;gap:2px}
.name{display:grid;grid-template-columns:auto 75px 39px 1fr;gap:3px;align-items:center;margin:2px 0 3px 2px}
.s{position:relative;height:11px}.s select{appearance:none;width:100%;height:11px;border:1px solid #b4b4b4;padding:0 2px;background:#fff}.s mg-caret{position:absolute;right:3px;top:5px}
.name .btn,.pr .btn{height:11px}.off{border-color:#eee;color:#999}
.dim{display:grid;grid-template-columns:6px 1fr 1fr 1fr 13px;gap:2px 3px;padding:3px 3px 4px;align-items:center}.dim .mm{text-align:center}.dim .h{padding-left:1px}
.mesh{display:grid;grid-template-columns:44px 41px 5px 41px 41px;gap:3px;padding:4px 0 4px 3px;align-items:center}
.mesh .b2{grid-column:4}.pr{display:grid;grid-template-columns:55px 55px 12px 1fr;gap:3px;padding:4px 5px 3px 3px;align-items:center}
.pr sup{font-size:4px;line-height:0}.pr .c{display:flex;align-items:center;gap:3px}.st{display:grid;grid-template-columns:auto 60px 1fr 50px;gap:2px;align-items:center;margin:5px 0 0 2px}.st .z{text-align:right}
.m{margin-top:9px}.tb{display:flex;align-items:center;gap:3px;height:12px;margin-top:2px}.tb .dd{width:22px}.tb .sq{width:6px;height:6px;background:#1ea04a;border:1px solid #0a6b2c}
.tb .ax{margin-left:22px}.tb .s{margin-left:auto;width:35px}.tb .s select{background:#eee;color:#888}
.info{height:48px;margin-top:2px}.inv{display:flex;align-items:center;gap:3px;margin:3px 0 3px}.three{display:grid;grid-template-columns:1fr 1fr 1fr;gap:3px}`,()=>{
 const inp=(v,l)=>`<input class="box" value="${v}" aria-label="${l}">`;
 const d=(ax,v)=>`<span>${ax}</span>${['Min','Max','Delta'].map((n,i)=>inp(v[i],n+' '+ax)).join('')}<span class="mm">mm</span>`;
 const dd=(i,l,s=10,c='')=>`<button class="dd ${c}" aria-label="${l}">${ic(i,s)}<mg-caret></mg-caret></button>`;
 return `<mg-page heading="View Pages"><mg-tabs wide items="View|Multi-Section|Slices|Grid"></mg-tabs><div class="p"><fieldset><legend>Visualization</legend><div class="vis"><div class="l"><div>${dd('shade','Shading')}<span>Shade&amp;Wire</span></div><div>${dd('badedge','Bad edges')}<span>Bad Edges Visible</span></div><div>${dd('flipped','Flipped triangles')}<span>Flipped Triangles Visible</span></div></div>
 <button class="cube" aria-label="Bounding box"><svg width="42" height="42" fill="none" stroke="#333"><path d="M3 5 24 2 41 8 18 13zM3 5v23l15 13V13M41 8v22L18 41M24 2v22L3 28M24 24l17 6"/></svg></button></div></fieldset></div></mg-page>
 <mg-page heading="Part Pages"><mg-tabs more on="1" items="Part List|Part Info|Part Fixing Info|Build Time Estimation"></mg-tabs><div class="p">
 <div class="name"><label for="pn">Part name</label><div class="s"><select id="pn"><option>dd</option></select><mg-caret></mg-caret></div><button class="btn">Rename</button><button class="btn off" disabled>Next</button></div>
 <fieldset><legend>Dimensions</legend><div class="dim"><span></span><span class="h">Min</span><span class="h">Max</span><span class="h">Delta</span><span></span>${d('X',['-15.777','15.777','31.553'])}${d('Y',['-8.503','8.503','17.006'])}${d('Z',['-12.043','15.580','25.624'])}</div></fieldset>
 <fieldset class="m"><legend>Mesh info</legend><div class="mesh"><label for="a"># Triangles</label><input id="a" class="box" value="390310"><label class="b2" for="b"># Points</label><input id="b" class="box" value="194181"><label for="c"># Marked</label><input id="c" class="box" value="0"><label class="b2" for="e"># Invisible</label><input id="e" class="box" value="0"></div></fieldset>
 <fieldset><legend>Properties</legend><div class="pr"><label for="v">Volume</label><input id="v" class="box" value="1000.152"><span>mm<sup>3</sup></span><button class="btn off" disabled>Update</button><label for="f">Surface</label><input id="f" class="box" value="3504.347"><span>mm<sup>2</sup></span><label class="c"><input type="checkbox" checked>Automatic</label></div></fieldset>
 <div class="st"><label for="s">Status</label><input id="s" class="box" value="Not changed"><label class="z" for="z">Z Compensated</label><input id="z" class="box" value="No"></div></div></mg-page>
 <mg-page heading="Annotation Pages" closed nopin><mg-tabs wide items="Text|Drawing|Attachments|Textures"></mg-tabs></mg-page>
 <mg-page heading="Measurement Pages"><mg-tabs items="Distance|Circle|Angle|Info|Final Part|Report"></mg-tabs><div class="p">
 <div class="tb">${dd('dot','First feature',8)}<span class="sq"></span>${dd('dot','Second feature',8)}${dd('axes','Axes',10,'ax')}<div class="s"><select aria-label="Anchor" disabled><option>Center</option></select><mg-caret></mg-caret></div></div>
 <fieldset class="info"><legend>Measurement Information</legend></fieldset><label class="inv"><input type="checkbox">Invisible</label>
 <div class="three"><button class="btn">Select</button><button class="btn">Clear Measurements</button><button class="btn">Snap Settings</button></div></div></mg-page>
 <mg-page heading="Fix Pages" closed nopin><mg-tabs more items="Autofix|Basic|Hole|Triangle|Shell|Overlap|I"></mg-tabs></mg-page>`});

/* ---------- application frame ---------- */
define('mg-app',`:host{display:grid;min-height:100vh;grid-template:15px 12px 48px 18px 1fr 3px/minmax(0,1fr) 203px}
mg-titlebar,mg-menu,mg-ribbon,footer{grid-column:1/-1}mg-side{grid-column:2;grid-row:4/6}mg-strip,mg-viewport{grid-column:1}footer{background:#3a97ec;grid-row:6}`,
 ()=>`<mg-titlebar></mg-titlebar><mg-menu></mg-menu><mg-ribbon></mg-ribbon><mg-strip></mg-strip><mg-viewport></mg-viewport><mg-side></mg-side><footer></footer>`);
</script>
</body>
</html>
